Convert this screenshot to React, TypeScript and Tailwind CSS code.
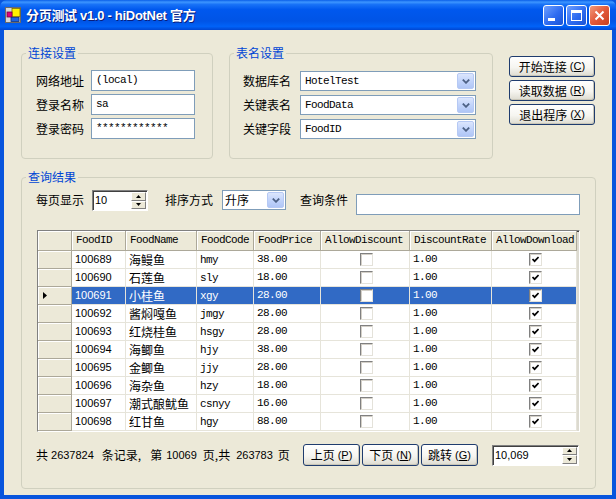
import React from "react";

const rows = [
  { id: "100689", name: "海鳗鱼", code: "hmy", price: "38.00" },
  { id: "100690", name: "石莲鱼", code: "sly", price: "18.00" },
  { id: "100691", name: "小桂鱼", code: "xgy", price: "28.00" },
  { id: "100692", name: "酱焖嘎鱼", code: "jmgy", price: "28.00" },
  { id: "100693", name: "红烧桂鱼", code: "hsgy", price: "28.00" },
  { id: "100694", name: "海鲫鱼", code: "hjy", price: "38.00" },
  { id: "100695", name: "金鲫鱼", code: "jjy", price: "28.00" },
  { id: "100696", name: "海杂鱼", code: "hzy", price: "18.00" },
  { id: "100697", name: "潮式酿鱿鱼", code: "csnyy", price: "16.00" },
  { id: "100698", name: "红甘鱼", code: "hgy", price: "88.00" },
];

const selectedId = "100691";

const headers = ["FoodID", "FoodName", "FoodCode", "FoodPrice", "AllowDiscount", "DiscountRate", "AllowDownload"];

function CheckBox({ checked }: { checked: boolean }) {
  return (
    <div className="w-[13px] h-[13px] bg-white border border-t-[#808080] border-l-[#808080] border-r-[#e4e2da] border-b-[#e4e2da] shadow-[inset_1px_1px_0_#d4d0c8] flex items-center justify-center">
      {checked && (
        <svg width="7" height="7" viewBox="0 0 7 7">
          <path d="M0.5 3 L2.6 5.2 L6.6 1" stroke="#000" strokeWidth="1.7" fill="none" />
        </svg>
      )}
    </div>
  );
}

function DropButton() {
  return (
    <div className="w-[17px] h-[16px] mr-[1px] rounded-[2px] border border-[#B6C9F4] bg-[linear-gradient(180deg,#DCE6FD_0%,#C2D4FB_50%,#B0C6F6_100%)] flex items-center justify-center">
      <svg width="8" height="5" viewBox="0 0 8 5">
        <path d="M0.8 0.6 L4 3.8 L7.2 0.6" stroke="#4D6185" strokeWidth="1.8" fill="none" />
      </svg>
    </div>
  );
}

function Spin() {
  return (
    <div className="flex flex-col w-[15px] h-full">
      <div className="flex-1 bg-[#ECE9D8] border border-t-white border-l-white border-r-[#808080] border-b-[#808080] flex items-center justify-center">
        <svg width="5" height="3" viewBox="0 0 5 3">
          <polygon points="2.5,0 5,3 0,3" fill="#000" />
        </svg>
      </div>
      <div className="flex-1 bg-[#ECE9D8] border border-t-white border-l-white border-r-[#808080] border-b-[#808080] flex items-center justify-center">
        <svg width="5" height="3" viewBox="0 0 5 3">
          <polygon points="0,0 5,0 2.5,3" fill="#000" />
        </svg>
      </div>
    </div>
  );
}

function XpButton({ label, hot, className }: { label: string; hot: string; className: string }) {
  return (
    <button className={`${className} rounded-[3px] border border-[#1F3C6E] bg-[linear-gradient(180deg,#FFFFFF_0%,#F6F5F0_55%,#DDDBD0_100%)] shadow-[inset_-1px_-1px_0_#C9C6B8] flex items-center justify-center text-[12px] leading-none text-black`}>
      {label}
      <span className="ml-[3px] font-['Liberation_Sans',sans-serif] text-[11px]">
        (<span className="underline">{hot}</span>)
      </span>
    </button>
  );
}

export default function App() {
  return (
    <div className="w-[616px] h-[499px] flex flex-col font-['Noto_Sans_CJK_SC',sans-serif] text-[12px] text-black bg-[#0855DD]">
      {/* title bar */}
      <div className="h-[30px] shrink-0 rounded-t-[7px] flex items-center pl-[5px] pr-[6px] bg-[linear-gradient(180deg,#0A5FE8_0%,#3D95FF_7%,#1872F7_15%,#0058EE_32%,#0054E6_70%,#0062F8_88%,#0046D2_100%)]">
        <svg width="16" height="16" viewBox="0 0 16 16">
          <rect x="0.5" y="0.5" width="15" height="15" fill="#D8D8D8" stroke="#6A6A6A" />
          <rect x="7" y="1.5" width="8" height="8" fill="#FFF200" stroke="#7A6A00" strokeWidth="0.8" />
          <rect x="2" y="5" width="5" height="5" fill="#E0007A" stroke="#700040" strokeWidth="0.8" />
          <rect x="6" y="10.5" width="8" height="4" fill="#1E63E0" stroke="#0A2F80" strokeWidth="0.8" />
        </svg>
        <div className="ml-[5px] text-white font-bold text-[13px] tracking-[-0.3px] leading-none [text-shadow:1px_1px_0_#0A1E7A] font-['Liberation_Sans','Noto_Sans_CJK_SC',sans-serif]">
          分页测试 v1.0 - hiDotNet 官方
        </div>
        <div className="ml-auto flex gap-[2px]">
          <div className="w-[21px] h-[21px] rounded-[3px] border border-white bg-[linear-gradient(135deg,#6FA0FF_0%,#2E6BF0_55%,#1A54D6_100%)] flex items-end pl-[4px] pb-[4px]">
            <div className="w-[7px] h-[3px] bg-white" />
          </div>
          <div className="w-[21px] h-[21px] rounded-[3px] border border-white bg-[linear-gradient(135deg,#6FA0FF_0%,#2E6BF0_55%,#1A54D6_100%)] flex items-center justify-center">
            <div className="w-[11px] h-[11px] border border-white border-t-[3px]" />
          </div>
          <div className="w-[21px] h-[21px] rounded-[3px] border border-white bg-[linear-gradient(135deg,#F29A7A_0%,#E2593A_50%,#C8401F_100%)] flex items-center justify-center">
            <svg width="11" height="11" viewBox="0 0 11 11">
              <path d="M1.5 1.5 L9.5 9.5 M9.5 1.5 L1.5 9.5" stroke="#fff" strokeWidth="2" />
            </svg>
          </div>
        </div>
      </div>

      {/* client area */}
      <div className="flex-1 mx-[4px] mb-[4px] bg-[#ECE9D8] flex flex-col">
        <div className="flex items-start pl-[17px] pt-[16px]">
          <fieldset className="w-[192px] h-[113px] border border-[#D0D0BF] rounded-[4px] pl-[14px] pt-[10px]">
            <legend className="-ml-[10px] px-[2px] text-[#0046D5] leading-[14px]">连接设置</legend>
            <div className="flex flex-col gap-[3px]">
              {[
                ["网络地址", "(local)"],
                ["登录名称", "sa"],
                ["登录密码", "************"],
              ].map(([label, val]) => (
                <div key={label} className="flex items-center">
                  <div className="w-[55px] leading-[21px]">{label}</div>
                  <div className="w-[104px] h-[21px] border border-[#7F9DB9] bg-white pl-[4px] flex items-center font-['Liberation_Mono',monospace] text-[11px] tracking-[-0.6px]">
                    {val}
                  </div>
                </div>
              ))}
            </div>
          </fieldset>

          <fieldset className="ml-[16px] w-[264px] h-[113px] border border-[#D0D0BF] rounded-[4px] pl-[13px] pt-[11px]">
            <legend className="-ml-[9px] px-[2px] text-[#0046D5] leading-[14px]">表名设置</legend>
            <div className="flex flex-col gap-[4px]">
              {[
                ["数据库名", "HotelTest"],
                ["关键表名", "FoodData"],
                ["关键字段", "FoodID"],
              ].map(([label, val]) => (
                <div key={label} className="flex items-center">
                  <div className="w-[57px] leading-[20px]">{label}</div>
                  <div className="w-[176px] h-[20px] border border-[#7F9DB9] bg-white flex items-center">
                    <div className="flex-1 pl-[4px] font-['Liberation_Mono',monospace] text-[11px] tracking-[-0.6px]">{val}</div>
                    <DropButton />
                  </div>
                </div>
              ))}
            </div>
          </fieldset>

          <div className="ml-[16px] mt-[10px] flex flex-col gap-[3px]">
            <XpButton label="开始连接" hot="C" className="w-[86px] h-[21px]" />
            <XpButton label="读取数据" hot="R" className="w-[86px] h-[21px]" />
            <XpButton label="退出程序" hot="X" className="w-[86px] h-[21px]" />
          </div>
        </div>

        <fieldset className="ml-[17px] mt-[11px] w-[575px] h-[319px] border border-[#D0D0BF] rounded-[4px] pl-[14px] pt-[6px]">
          <legend className="-ml-[10px] px-[2px] text-[#0046D5] leading-[14px]">查询结果</legend>

          <div className="flex items-start">
            <div className="w-[56px] leading-[20px]">每页显示</div>
            <div className="w-[56px] h-[21px] bg-white border border-t-[#808080] border-l-[#808080] border-r-white border-b-white shadow-[inset_1px_1px_0_#404040] flex pl-[2px] pt-[1px] pr-[1px] pb-[1px]">
              <div className="flex-1 font-['Liberation_Sans',sans-serif] text-[11px] leading-[17px]">10</div>
              <Spin />
            </div>
            <div className="ml-[17px] w-[57px] leading-[20px]">排序方式</div>
            <div className="w-[64px] h-[20px] border border-[#7F9DB9] bg-white flex items-center">
              <div className="flex-1 pl-[2px] leading-[18px]">升序</div>
              <DropButton />
            </div>
            <div className="ml-[14px] w-[56px] leading-[20px]">查询条件</div>
            <div className="mt-[4px] w-[224px] h-[21px] border border-[#7F9DB9] bg-white" />
          </div>

          {/* data grid */}
          <div className="ml-[1px] mt-[15px] w-[543px] h-[202px] border border-t-[#808080] border-l-[#808080] border-r-white border-b-white shadow-[inset_1px_1px_0_#404040] bg-[#DCDAD0] flex flex-col">
            <div className="grid grid-cols-[34px_54px_71px_57px_67px_89px_82px_85px] h-[20px]">
              <div className="bg-[#ECE9D8] border-r border-b border-[#ACA899] shadow-[inset_1px_1px_0_#fff]" />
              {headers.map((h) => (
                <div
                  key={h}
                  className="bg-[#ECE9D8] border-r border-b border-[#ACA899] shadow-[inset_1px_1px_0_#fff] pl-[4px] font-['Liberation_Mono',monospace] text-[11px] tracking-[-0.6px] leading-[19px] whitespace-nowrap overflow-hidden"
                >
                  {h}
                </div>
              ))}
            </div>
            {rows.map((r) => {
              const sel = r.id === selectedId;
              const cell = sel
                ? "bg-[#316AC5] text-white border-r border-b border-[#E6E4DA] pl-[3px] whitespace-nowrap overflow-hidden"
                : "bg-white border-r border-b border-[#E6E4DA] pl-[3px] whitespace-nowrap overflow-hidden";
              return (
                <div key={r.id} className="grid grid-cols-[34px_54px_71px_57px_67px_89px_82px_85px] h-[18px]">
                  <div className="bg-[#ECE9D8] border-r border-b border-[#ACA899] shadow-[inset_1px_1px_0_#fff] flex items-center pl-[5px]">
                    {sel && (
                      <svg width="4" height="7" viewBox="0 0 4 7">
                        <polygon points="0,0 4,3.5 0,7" fill="#000" />
                      </svg>
                    )}
                  </div>
                  <div className={`${cell} font-['Liberation_Sans',sans-serif] text-[11px] leading-[17px]`}>{r.id}</div>
                  <div className={`${cell} leading-[17px]`}>{r.name}</div>
                  <div className={`${cell} font-['Liberation_Mono',monospace] text-[11px] tracking-[-0.6px] leading-[18px]`}>{r.code}</div>
                  <div className={`${cell} font-['Liberation_Mono',monospace] text-[11px] tracking-[-0.6px] leading-[17px]`}>{r.price}</div>
                  <div className={`${cell} flex items-center justify-center`}>
                    <CheckBox checked={false} />
                  </div>
                  <div className={`${cell} font-['Liberation_Mono',monospace] text-[11px] tracking-[-0.6px] leading-[17px]`}>1.00</div>
                  <div className={`${cell} flex items-center justify-center`}>
                    <CheckBox checked={true} />
                  </div>
                </div>
              );
            })}
          </div>

          <div className="flex items-center mt-[12px]">
            <div className="w-[267px] flex items-center whitespace-nowrap leading-[20px]">
              <span>共</span>
              <span className="ml-[3px] font-['Liberation_Sans',sans-serif] text-[11px]">2637824</span>
              <span className="ml-[8px]">条记录,</span>
              <span className="ml-[9px]">第</span>
              <span className="ml-[4px] font-['Liberation_Sans',sans-serif] text-[11px]">10069</span>
              <span className="ml-[6px]">页,共</span>
              <span className="ml-[6px] font-['Liberation_Sans',sans-serif] text-[11px]">263783</span>
              <span className="ml-[5px]">页</span>
            </div>
            <div className="flex gap-[2px]">
              <XpButton label="上页" hot="P" className="w-[57px] h-[22px]" />
              <XpButton label="下页" hot="N" className="w-[57px] h-[22px]" />
              <XpButton label="跳转" hot="G" className="w-[57px] h-[22px]" />
            </div>
            <div className="ml-[14px] w-[87px] h-[21px] bg-white border border-t-[#808080] border-l-[#808080] border-r-white border-b-white shadow-[inset_1px_1px_0_#404040] flex pl-[2px] pt-[1px] pr-[1px] pb-[1px]">
              <div className="flex-1 font-['Liberation_Sans',sans-serif] text-[11px] leading-[17px]">10,069</div>
              <Spin />
            </div>
          </div>
        </fieldset>
      </div>
    </div>
  );
}
